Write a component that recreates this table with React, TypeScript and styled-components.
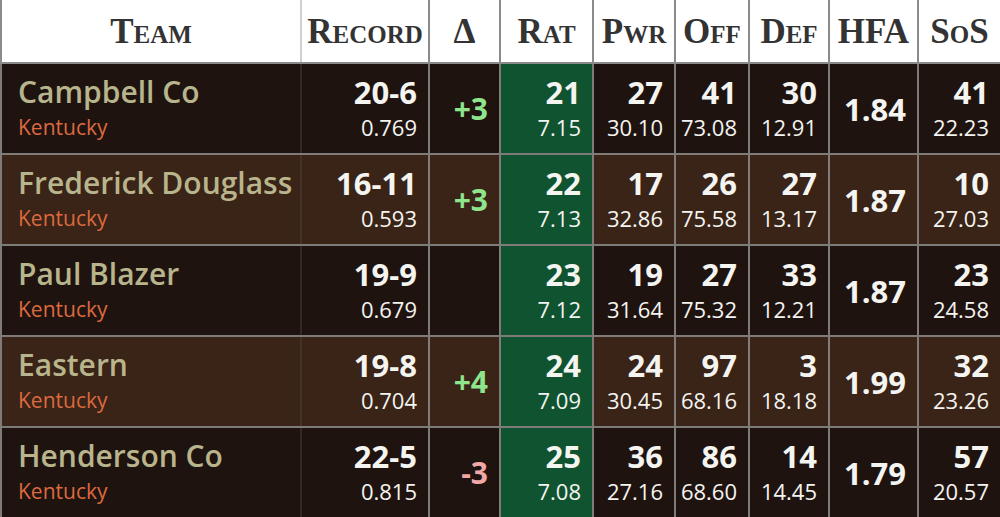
import React from "react";
import styled, { createGlobalStyle } from "styled-components";

const Global = createGlobalStyle`
  html, body { margin: 0; padding: 0; background: #1f1310; }
  body { width: 1000px; height: 517px; overflow: hidden; }
`;

const Table = styled.table`
  width: 1000px;
  border-collapse: collapse;
  table-layout: fixed;
  font-family: "Open Sans", "Noto Sans", sans-serif;
`;

const HeadCell = styled.th<{ $w: number; $soft?: boolean }>`
  width: ${(p) => p.$w - 2}px;
  height: 62px;
  padding: 0;
  background: #ffffff;
  color: #333333;
  font-family: "Liberation Serif", "DejaVu Serif", serif;
  font-weight: 700;
  font-size: 35px;
  font-variant: small-caps;
  text-align: center;
  vertical-align: middle;
  border-left: 2px solid ${(p) => (p.$soft ? "#d0d0d0" : "#8a8a8a")};
  border-bottom: 2px solid #8a8a8a;
  &:first-child { border-left: 2px solid #8a8a8a; }
  line-height: 1;
  white-space: nowrap;
`;

const Row = styled.tr<{ $alt: boolean }>`
  background: ${(p) => (p.$alt ? "#3a2317" : "#1f1310")};
`;

const Cell = styled.td<{ $green?: boolean; $soft?: boolean }>`
  height: 91px;
  padding: 0 11px 0 0;
  box-sizing: border-box;
  text-align: right;
  vertical-align: middle;
  border-left: 2px solid ${(p) => (p.$soft ? "rgba(90,80,75,0.35)" : "#7e7b78")};
  border-bottom: 2px solid #7e7b78;
  background: ${(p) => (p.$green ? "#0f5330" : "transparent")};
  color: #f4f4f0;
  white-space: nowrap;
  &:first-child { border-left: 2px solid #7e7b78; }
`;

const TeamCell = styled(Cell)`
  text-align: left;
  padding-left: 16px;
`;

const TeamName = styled.div`
  color: #b8b58c;
  font-size: 30px;
  font-weight: 600;
  line-height: 36px;
  white-space: nowrap;
`;

const State = styled.div`
  color: #dd6a3e;
  font-size: 21px;
  line-height: 34px;
`;

const Big = styled.div`
  font-size: 31px;
  font-weight: 700;
  line-height: 36px;
`;

const Small = styled.div`
  font-size: 22px;
  font-weight: 400;
  line-height: 34px;
`;

const Delta = styled.div<{ $neg: boolean }>`
  font-size: 30px;
  font-weight: 700;
  color: ${(p) => (p.$neg ? "#f2a7a7" : "#8fe58c")};
`;

const Hfa = styled.div`
  font-size: 31px;
  font-weight: 700;
`;

type R = {
  name: string;
  rec: string;
  pct: string;
  d: string;
  rat: [string, string];
  pwr: [string, string];
  off: [string, string];
  def: [string, string];
  hfa: string;
  sos: [string, string];
};

const rows: R[] = [
  { name: "Campbell Co", rec: "20-6", pct: "0.769", d: "+3", rat: ["21", "7.15"], pwr: ["27", "30.10"], off: ["41", "73.08"], def: ["30", "12.91"], hfa: "1.84", sos: ["41", "22.23"] },
  { name: "Frederick Douglass", rec: "16-11", pct: "0.593", d: "+3", rat: ["22", "7.13"], pwr: ["17", "32.86"], off: ["26", "75.58"], def: ["27", "13.17"], hfa: "1.87", sos: ["10", "27.03"] },
  { name: "Paul Blazer", rec: "19-9", pct: "0.679", d: "", rat: ["23", "7.12"], pwr: ["19", "31.64"], off: ["27", "75.32"], def: ["33", "12.21"], hfa: "1.87", sos: ["23", "24.58"] },
  { name: "Eastern", rec: "19-8", pct: "0.704", d: "+4", rat: ["24", "7.09"], pwr: ["24", "30.45"], off: ["97", "68.16"], def: ["3", "18.18"], hfa: "1.99", sos: ["32", "23.26"] },
  { name: "Henderson Co", rec: "22-5", pct: "0.815", d: "-3", rat: ["25", "7.08"], pwr: ["36", "27.16"], off: ["86", "68.60"], def: ["14", "14.45"], hfa: "1.79", sos: ["57", "20.57"] },
];

const Pair = ({ v }: { v: [string, string] }) => (
  <>
    <Big>{v[0]}</Big>
    <Small>{v[1]}</Small>
  </>
);

export default function App() {
  return (
    <>
      <Global />
      <Table>
        <thead>
          <tr>
            <HeadCell $w={300}>Team</HeadCell>
            <HeadCell $w={128} $soft>Record</HeadCell>
            <HeadCell $w={71}>Δ</HeadCell>
            <HeadCell $w={93}>Rat</HeadCell>
            <HeadCell $w={82}>Pwr</HeadCell>
            <HeadCell $w={74}>Off</HeadCell>
            <HeadCell $w={80}>Def</HeadCell>
            <HeadCell $w={89}>HFA</HeadCell>
            <HeadCell $w={83}>SoS</HeadCell>
          </tr>
        </thead>
        <tbody>
          {rows.map((r, i) => (
            <Row key={r.name} $alt={i % 2 === 1}>
              <TeamCell>
                <TeamName>{r.name}</TeamName>
                <State>Kentucky</State>
              </TeamCell>
              <Cell $soft>
                <Big>{r.rec}</Big>
                <Small>{r.pct}</Small>
              </Cell>
              <Cell>
                {r.d && <Delta $neg={r.d.startsWith("-")}>{r.d}</Delta>}
              </Cell>
              <Cell $green>
                <Pair v={r.rat} />
              </Cell>
              <Cell>
                <Pair v={r.pwr} />
              </Cell>
              <Cell>
                <Pair v={r.off} />
              </Cell>
              <Cell>
                <Pair v={r.def} />
              </Cell>
              <Cell>
                <Hfa>{r.hfa}</Hfa>
              </Cell>
              <Cell>
                <Pair v={r.sos} />
              </Cell>
            </Row>
          ))}
        </tbody>
      </Table>
    </>
  );
}
